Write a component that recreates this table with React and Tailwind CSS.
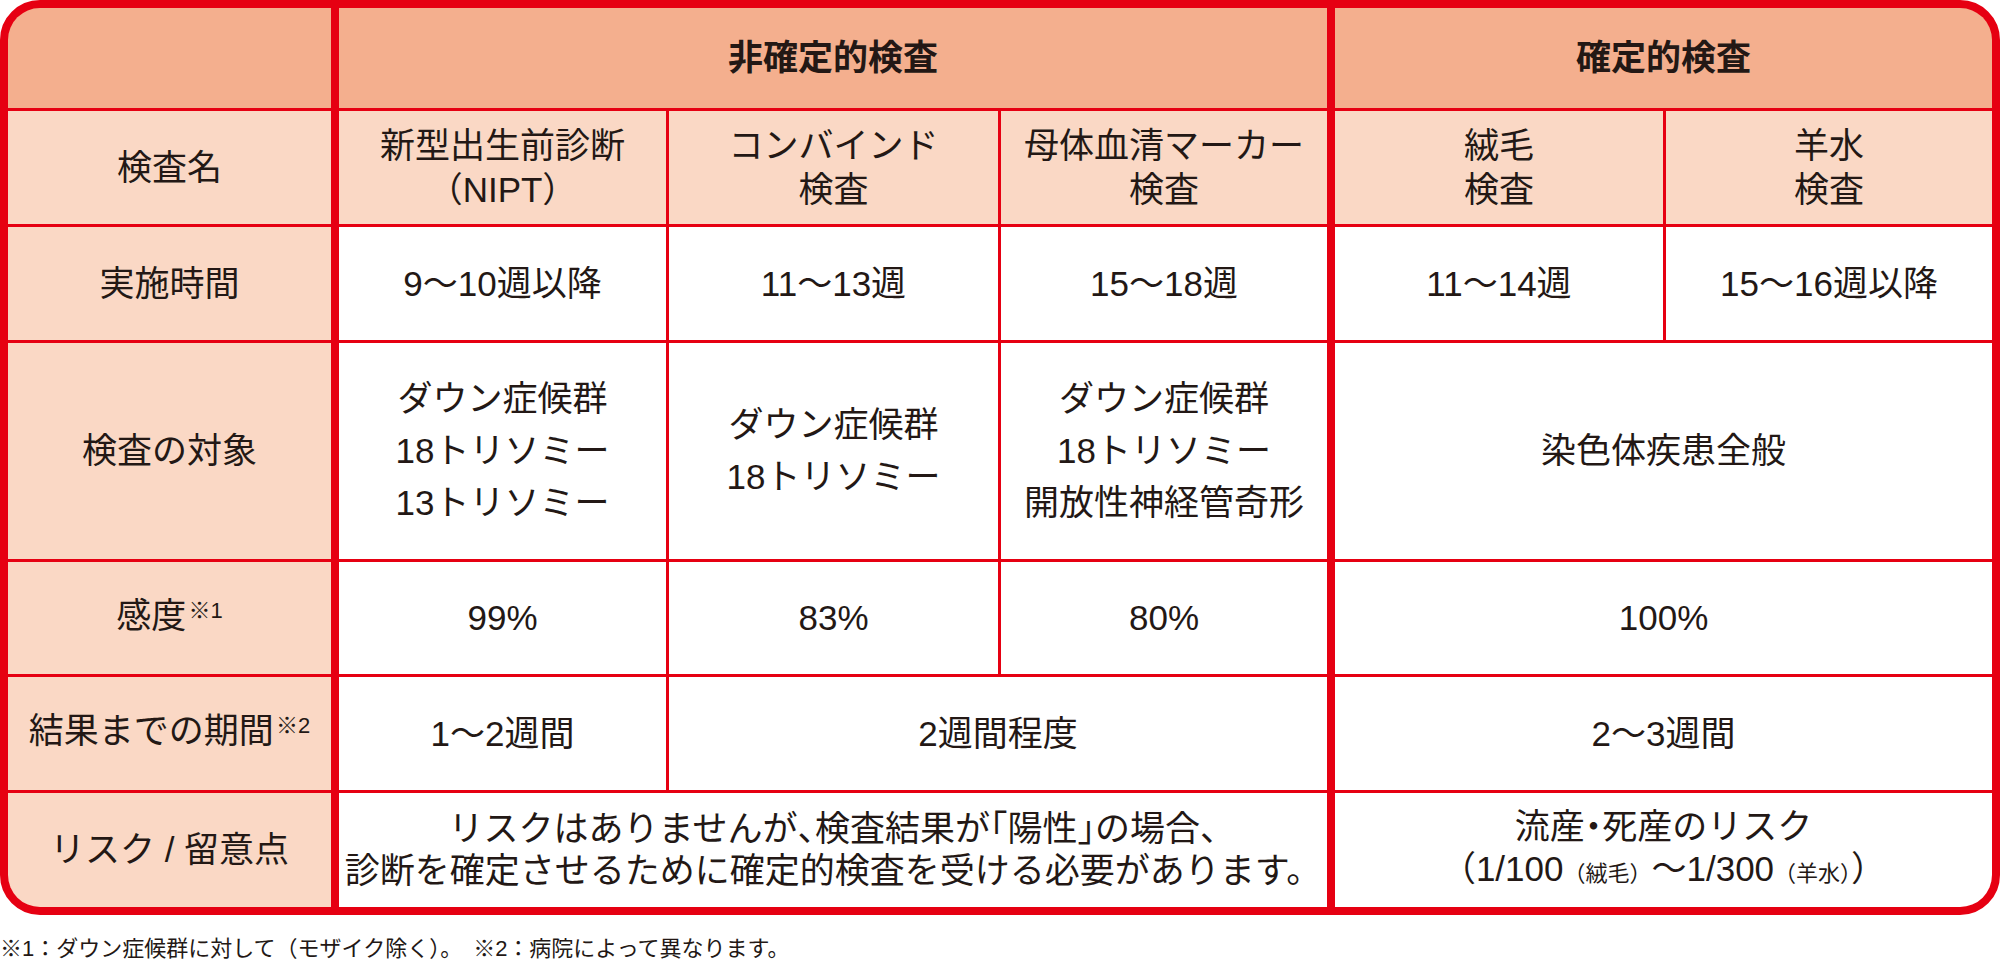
function Cell({ children, className = "", span = "" }) {
  return (
    <div className={`flex flex-col items-center justify-center text-center ${span} ${className}`}>
      {children}
    </div>
  );
}

function Sup({ children }) {
  return <span className="relative -top-[10px] text-[22px] ml-[2px]">{children}</span>;
}

// half-width punctuation, as the print version sets it
function H({ children }) {
  return <span className="[font-feature-settings:'halt']">{children}</span>;
}

export default function App() {
  const head = "bg-[#f4af8e]";
  const label = "bg-[#fad8c5]";
  const sub = "bg-[#fad8c5]";
  const body = "bg-white";
  const thick = "border-l-[5px] border-[#e60012]";

  return (
    <div className="w-[2000px] h-[963px] bg-white text-[#231815] font-['Liberation_Sans','Noto_Sans_CJK_JP',sans-serif]">
      <div className="w-[2000px] rounded-[40px] border-[8px] border-[#e60012] bg-[#e60012] overflow-hidden">
        <div className="grid grid-cols-[323px_332px_329px_326px_333px_326px] grid-rows-[100px_113px_113px_216px_112px_113px_114px] gap-[3px] text-[35px] leading-[52px]">
          {/* header */}
          <Cell className={head} />
          <Cell className={`${head} ${thick} font-bold`} span="col-span-3">非確定的検査</Cell>
          <Cell className={`${head} ${thick} font-bold`} span="col-span-2">確定的検査</Cell>

          {/* 検査名 */}
          <Cell className={label}>検査名</Cell>
          <Cell className={`${sub} ${thick} leading-[44px]`}>
            <span>新型出生前診断</span>
            <span>（NIPT）</span>
          </Cell>
          <Cell className={`${sub} leading-[44px]`}>
            <span>コンバインド</span>
            <span>検査</span>
          </Cell>
          <Cell className={`${sub} leading-[44px]`}>
            <span>母体血清マーカー</span>
            <span>検査</span>
          </Cell>
          <Cell className={`${sub} ${thick} leading-[44px]`}>
            <span>絨毛</span>
            <span>検査</span>
          </Cell>
          <Cell className={`${sub} leading-[44px]`}>
            <span>羊水</span>
            <span>検査</span>
          </Cell>

          {/* 実施時間 */}
          <Cell className={label}>実施時間</Cell>
          <Cell className={`${body} ${thick}`}>9〜10週以降</Cell>
          <Cell className={body}>11〜13週</Cell>
          <Cell className={body}>15〜18週</Cell>
          <Cell className={`${body} ${thick}`}>11〜14週</Cell>
          <Cell className={body}>15〜16週以降</Cell>

          {/* 検査の対象 */}
          <Cell className={label}>検査の対象</Cell>
          <Cell className={`${body} ${thick}`}>
            <span>ダウン症候群</span>
            <span>18トリソミー</span>
            <span>13トリソミー</span>
          </Cell>
          <Cell className={body}>
            <span>ダウン症候群</span>
            <span>18トリソミー</span>
          </Cell>
          <Cell className={body}>
            <span>ダウン症候群</span>
            <span>18トリソミー</span>
            <span>開放性神経管奇形</span>
          </Cell>
          <Cell className={`${body} ${thick}`} span="col-span-2">染色体疾患全般</Cell>

          {/* 感度 */}
          <Cell className={label}>
            <span>感度<Sup>※1</Sup></span>
          </Cell>
          <Cell className={`${body} ${thick}`}>99%</Cell>
          <Cell className={body}>83%</Cell>
          <Cell className={body}>80%</Cell>
          <Cell className={`${body} ${thick}`} span="col-span-2">100%</Cell>

          {/* 結果までの期間 */}
          <Cell className={label}>
            <span className="whitespace-nowrap">結果までの期間<Sup>※2</Sup></span>
          </Cell>
          <Cell className={`${body} ${thick}`}>1〜2週間</Cell>
          <Cell className={body} span="col-span-2">2週間程度</Cell>
          <Cell className={`${body} ${thick}`} span="col-span-2">2〜3週間</Cell>

          {/* リスク */}
          <Cell className={label}>リスク / 留意点</Cell>
          <Cell className={`${body} ${thick} leading-[42px]`} span="col-span-3">
            <span className="whitespace-nowrap">
              リスクはありませんが<H>、</H>検査結果が<H>「</H>陽性<H>」</H>の場合<H>、</H>
            </span>
            <span className="whitespace-nowrap">診断を確定させるために確定的検査を受ける必要があります。</span>
          </Cell>
          <Cell className={`${body} ${thick} leading-[42px]`} span="col-span-2">
            <span>流産<H>・</H>死産のリスク</span>
            <span className="whitespace-nowrap">
              （1/100<span className="text-[22px]">（絨毛）</span>〜1/300<span className="text-[22px]">（羊水）</span>）
            </span>
          </Cell>
        </div>
      </div>
      <p className="mt-[21px] text-[22px] leading-[26px] whitespace-nowrap">
        ※1：ダウン症候群に対して（モザイク除く）。　※2：病院によって異なります。
      </p>
    </div>
  );
}
